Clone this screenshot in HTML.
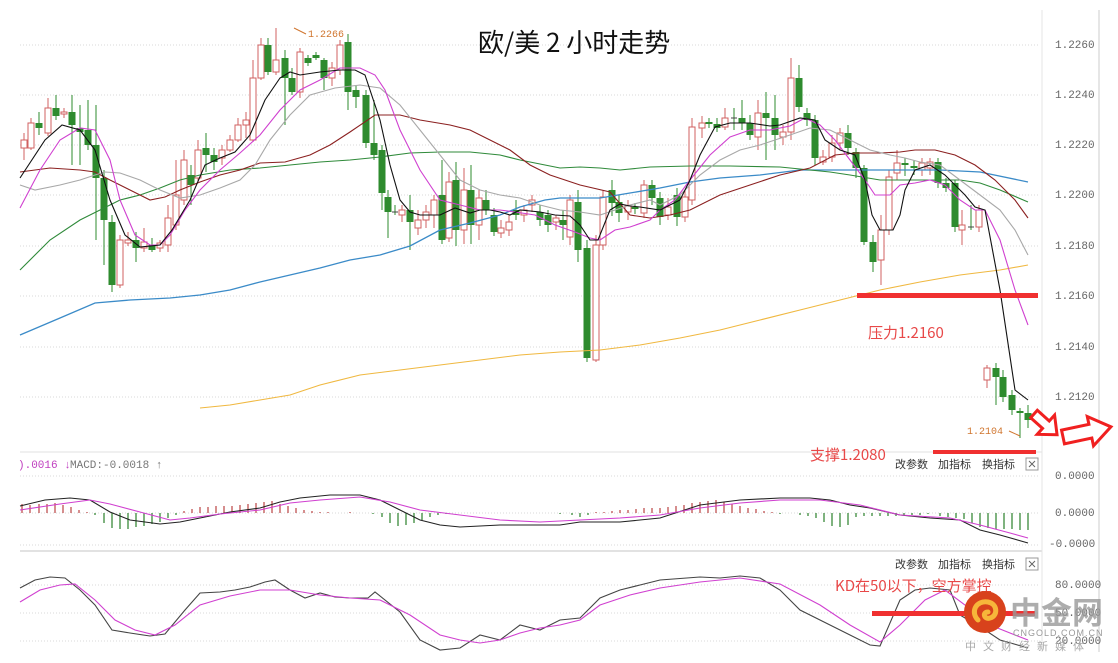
<!DOCTYPE html>
<html><head><meta charset="utf-8">
<style>
html,body{margin:0;padding:0;background:#fff;}
body{width:1118px;height:663px;overflow:hidden;position:relative;font-family:"Liberation Sans","Noto Sans CJK SC",sans-serif;}
svg{position:absolute;left:0;top:0;}
</style></head><body>
<svg id="s" width="1118" height="663" xmlns="http://www.w3.org/2000/svg" font-family="Liberation Sans, Noto Sans CJK SC, sans-serif">
<g stroke="#d8d8d8" stroke-dasharray="1,2" stroke-width="1">
<line x1="20" y1="45" x2="1040" y2="45"/><line x1="20" y1="95" x2="1040" y2="95"/>
<line x1="20" y1="145" x2="1040" y2="145"/><line x1="20" y1="195" x2="1040" y2="195"/>
<line x1="20" y1="246" x2="1040" y2="246"/><line x1="20" y1="296" x2="1040" y2="296"/>
<line x1="20" y1="347" x2="1040" y2="347"/><line x1="20" y1="397" x2="1040" y2="397"/>
<line x1="20" y1="476" x2="1040" y2="476"/><line x1="20" y1="513" x2="1040" y2="513"/>
<line x1="20" y1="545" x2="1040" y2="545"/>
<line x1="20" y1="585" x2="1040" y2="585"/><line x1="20" y1="613" x2="1040" y2="613"/><line x1="20" y1="641" x2="1040" y2="641"/>
</g>
<line x1="20" y1="452" x2="1042" y2="452" stroke="#e2e2e2"/>
<line x1="20" y1="551" x2="1042" y2="551" stroke="#e2e2e2" stroke-width="2"/>
<line x1="1042" y1="10" x2="1042" y2="652" stroke="#e4e4e4"/>
<line x1="1099" y1="10" x2="1099" y2="652" stroke="#e6e6e6" stroke-width="2"/>
<g font-family="Liberation Mono, monospace" font-size="11" fill="#666">
<text x="1055" y="48">1.2260</text><text x="1055" y="98">1.2240</text><text x="1055" y="148">1.2220</text>
<text x="1055" y="198">1.2200</text><text x="1055" y="249">1.2180</text><text x="1055" y="299">1.2160</text>
<text x="1055" y="350">1.2140</text><text x="1055" y="400">1.2120</text>
<text x="1055" y="479">0.0000</text><text x="1055" y="516">0.0000</text><text x="1049" y="547">-0.0000</text>
<text x="1055" y="588">80.0000</text><text x="1055" y="616">50.0000</text><text x="1055" y="644">20.0000</text>
</g>
<text x="478" y="52" font-size="26" fill="#111" font-family="Noto Sans CJK SC, sans-serif">欧/美 2 小时走势</text>
<g id="cd"></g>
<g fill="none" stroke-width="1.1" id="ma"></g>
<text x="308" y="37" font-size="10" fill="#d0752e" font-family="Liberation Mono, monospace">1.2266</text>
<path d="M294,28 L306,34" stroke="#d0752e" fill="none"/>
<text x="967" y="434" font-size="10" fill="#d0752e" font-family="Liberation Mono, monospace">1.2104</text>
<path d="M1009,431 L1020,436" stroke="#d0752e" fill="none"/>
<rect x="857" y="293" width="181" height="5" fill="#f03030"/>
<rect x="933" y="450" width="103" height="4" fill="#f03030"/>
<text x="868" y="338" font-size="15" fill="#e84848" font-family="Noto Sans CJK SC, sans-serif">压力1.2160</text>
<text x="810" y="460" font-size="15" fill="#e84848" font-family="Noto Sans CJK SC, sans-serif">支撑1.2080</text>
<path transform="translate(1034,414) rotate(42)" d="M0,-5 L16,-5 L16,-13 L31,0 L16,13 L16,5 L0,5 Z" fill="#fff" stroke="#f02020" stroke-width="3" stroke-linejoin="miter"/>
<path transform="translate(1063,437) rotate(-12)" d="M0,-7 L28,-7 L28,-15 L49,0 L28,15 L28,7 L0,7 Z" fill="#fff" stroke="#f02020" stroke-width="3" stroke-linejoin="miter"/>
<g font-size="11" fill="#333" font-family="Noto Sans CJK SC, sans-serif">
<text x="895" y="468">改参数</text><text x="938" y="468">加指标</text><text x="982" y="468">换指标</text>
<text x="895" y="568">改参数</text><text x="938" y="568">加指标</text><text x="982" y="568">换指标</text>
</g>
<rect x="1026" y="458" width="12" height="12" fill="#fff" stroke="#999"/><path d="M1029,461 l6,6 M1035,461 l-6,6" stroke="#666"/>
<rect x="1026" y="558" width="12" height="12" fill="#fff" stroke="#999"/><path d="M1029,561 l6,6 M1035,561 l-6,6" stroke="#666"/>
<text x="18" y="468" font-size="11" fill="#c040c0" font-family="Liberation Mono, monospace">).0016 ↓</text>
<text x="70" y="468" font-size="11" fill="#777" font-family="Liberation Mono, monospace">MACD:-0.0018 ↑</text>
<g id="hist"></g>
<g fill="none" stroke-width="1.2" id="ind"></g>
<rect x="872" y="611" width="163" height="5" fill="#f03030"/>
<text x="835" y="591" font-size="15" fill="#e84848" font-family="Noto Sans CJK SC, sans-serif">KD在50以下，空方掌控</text>
<circle cx="985" cy="612" r="21" fill="#d8421c"/>
<path d="M978,620 C970,612 976,600 988,602 C998,604 998,616 990,618 C984,620 982,612 988,612" fill="none" stroke="#f7b63a" stroke-width="5" stroke-linecap="round"/>
<text x="1010" y="624" font-size="31" font-weight="bold" fill="#999" fill-opacity="0.8" font-family="Noto Sans CJK SC, sans-serif">中金网</text>
<text x="1013" y="636" font-size="9" fill="#999" letter-spacing="1">CNGOLD.COM.CN</text>
<text x="965" y="650" font-size="11" fill="#aaa" letter-spacing="7" font-family="Noto Sans CJK SC, sans-serif">中文财经新媒体</text>
</svg>
<script>
var NS="http://www.w3.org/2000/svg";
function el(p,t,a){var e=document.createElementNS(NS,t);for(var k in a)e.setAttribute(k,a[k]);p.appendChild(e);return e;}
var cd=document.getElementById('cd');
var C=[[24,148,140,133,160],[31,148,123,118,150],[39,123,128,112,135],[48,133,108,98,136],[56,108,116,95,120],[64,114,112,108,118],[72,112,125,95,165],[80,128,132,105,165],[88,130,145,100,150],[96,145,178,105,240],[104,178,220,170,265],[112,222,285,215,292],[120,285,240,235,288],[128,243,240,232,246],[136,240,248,232,262],[144,248,242,228,252],[152,245,250,238,252],[160,248,243,240,252],[168,245,218,205,252],[176,225,195,160,230],[184,200,160,150,205],[191,175,185,165,205],[198,178,150,140,182],[206,148,155,133,172],[214,155,162,148,170],[222,158,150,145,165],[230,150,140,135,152],[238,140,125,118,142],[246,125,120,112,138],[253,140,78,60,142],[261,78,45,38,80],[268,45,72,38,75],[276,72,60,28,75],[285,58,78,50,125],[292,78,92,68,95],[300,92,52,48,98],[308,58,63,55,66],[316,55,58,52,60],[324,60,78,58,90],[332,78,68,62,86],[340,70,45,40,75],[348,42,92,34,110],[356,90,97,85,108],[366,95,143,90,148],[374,143,155,100,160],[382,150,193,145,210],[388,197,212,190,238],[395,212,212,205,215],[402,215,210,205,222],[410,210,222,195,250],[418,228,220,210,235],[426,220,212,205,228],[434,215,200,195,228],[442,195,240,160,244],[449,238,182,172,242],[456,180,230,162,246],[464,230,190,168,244],[471,190,225,165,244],[479,225,198,190,240],[486,200,210,190,215],[494,215,232,208,236],[501,233,228,220,238],[509,230,222,215,236],[516,210,215,200,220],[524,215,210,205,222],[532,205,200,195,212],[540,212,220,205,226],[548,215,225,210,232],[556,222,218,215,230],[563,220,225,210,240],[570,237,200,195,245],[578,202,250,190,262],[587,248,358,240,362],[596,360,245,235,362],[603,245,197,190,250],[612,190,203,180,216],[619,202,213,195,222],[628,212,206,200,220],[635,207,209,203,214],[644,213,185,180,218],[652,185,198,180,205],[660,198,217,192,225],[668,215,207,198,220],[677,195,217,188,226],[685,217,197,190,222],[692,200,127,118,205],[702,128,123,116,138],[709,122,124,118,128],[717,124,128,118,132],[725,127,118,108,130],[734,118,118,108,130],[742,118,123,100,130],[750,123,135,115,140],[758,137,113,100,150],[766,113,118,92,160],[775,118,135,95,150],[783,137,132,125,145],[791,132,78,58,140],[799,78,107,65,112],[807,113,120,108,126],[815,120,158,115,165],[823,162,157,150,165],[832,157,143,135,162],[840,143,133,128,150],[848,133,148,125,155],[856,152,168,148,178],[864,168,242,165,245],[873,242,262,235,272],[881,260,230,215,285],[889,230,177,170,235],[897,173,163,150,180],[905,163,165,158,176],[914,166,168,160,175],[922,170,163,158,176],[930,168,162,158,175],[938,162,183,158,188],[946,183,188,178,192],[955,183,227,180,232],[962,230,225,210,245],[971,227,227,205,230],[979,227,210,205,232],[987,380,368,365,388],[996,368,377,363,405],[1003,377,397,370,402],[1012,395,410,390,415],[1020,411,413,408,438],[1028,413,420,405,428]];
C.forEach(function(c){var up=c[2]<c[1];var col=up?"#d06060":"#2e8b2e";var t=Math.min(c[1],c[2]),b=Math.max(c[1],c[2]);
el(cd,'line',{x1:c[0],x2:c[0],y1:c[3],y2:c[4],stroke:col,'stroke-width':1});
if(b-t<1.5){el(cd,'line',{x1:c[0]-3,x2:c[0]+3,y1:t,y2:t,stroke:up?col:"#444"});}
else if(up)el(cd,'rect',{x:c[0]-3,y:t,width:6,height:b-t,fill:"#fff",stroke:col});
else el(cd,'rect',{x:c[0]-3.5,y:t,width:7,height:b-t,fill:col});});
function pl(g,pts,col,w){el(document.getElementById(g),'polyline',{points:pts,stroke:col,'stroke-width':w||1.1,fill:'none'});}
pl('ma',"200,408 230,405 260,400 290,395 320,385 360,375 400,370 440,365 480,360 520,355 560,352 600,350 640,345 680,338 720,330 760,320 800,310 840,300 880,290 920,282 960,275 1000,270 1028,265","#f0b840");
pl('ma',"20,335 60,318 95,303 130,300 170,298 200,295 230,290 260,282 290,275 320,268 350,260 380,255 410,246 440,230 470,223 500,215 520,207 545,200 560,198 600,198 630,193 660,188 690,182 720,178 760,175 800,170 860,170 900,170 940,170 980,172 1028,182","#3b8bc8",1.3);
pl('ma',"20,270 50,240 80,220 100,210 120,200 140,195 160,188 180,180 200,175 230,170 260,168 290,165 320,162 350,160 380,157 410,153 440,152 470,152 500,155 520,160 545,165 560,168 580,167 600,168 620,170 650,167 690,166 730,166 780,167 830,172 850,175 880,180 910,180 940,180 960,180 980,183 1000,190 1028,202","#2f8a3a");
pl('ma',"20,172 50,168 80,170 95,172 110,180 130,190 150,200 165,197 180,190 200,182 220,175 240,170 260,163 285,162 310,155 330,145 350,132 375,115 400,115 420,120 450,125 470,130 490,140 510,150 530,165 550,175 580,185 610,192 630,215 650,218 670,215 690,210 720,195 750,185 780,175 810,168 835,155 855,153 880,153 900,152 915,150 935,150 955,155 975,165 995,180 1015,200 1028,218","#8b2020");
pl('ma',"20,185 35,190 60,185 80,180 95,175 105,172 120,173 140,180 160,190 180,198 200,195 220,188 240,180 255,165 270,140 290,115 310,95 335,88 360,85 380,88 400,105 420,130 440,155 460,180 480,190 500,195 520,198 540,205 560,210 580,212 600,215 630,205 650,200 660,205 680,195 700,175 720,160 740,150 760,145 790,135 810,128 830,130 850,140 870,150 890,155 905,158 920,162 940,165 960,180 980,195 1000,210 1015,230 1028,255","#a8a8a8");
pl('ma',"20,208 40,170 60,140 80,128 95,130 110,160 120,200 135,235 150,245 160,245 170,235 185,210 200,190 220,170 240,153 260,135 280,110 300,90 320,80 340,68 360,68 375,75 385,90 400,130 420,170 440,200 460,205 480,210 500,210 515,212 535,215 555,225 575,232 590,238 600,240 615,230 630,227 650,220 660,210 675,200 690,180 710,155 730,137 750,130 770,130 790,126 805,118 820,125 835,140 850,160 865,180 875,195 890,195 900,185 915,183 930,180 945,185 960,200 975,210 985,210 1000,240 1015,290 1028,325","#d040d0");
pl('ma',"20,178 45,140 62,125 80,130 95,150 110,200 125,235 140,247 160,245 172,230 190,200 205,165 220,158 235,152 250,135 265,100 280,78 290,72 300,75 320,72 340,70 355,70 365,75 380,120 390,165 400,200 410,212 420,215 440,215 455,208 470,213 480,210 490,210 500,212 510,215 520,210 540,212 555,215 570,216 580,225 590,240 598,240 610,210 620,204 630,206 640,207 660,210 680,200 690,180 700,155 715,127 730,123 750,123 770,126 780,125 800,118 815,120 825,140 840,150 855,155 865,180 872,215 880,230 893,230 900,215 905,190 915,170 930,165 945,175 955,185 965,195 975,207 985,210 1000,290 1015,390 1028,400","#111");
var h=document.getElementById('hist');
var H=[[22,-9],[30,-8],[39,-9],[47,-9],[55,-10],[63,-8],[71,-6],[79,-3],[87,-1],[95,2],[104,10],[112,15],[120,16],[128,16],[136,14],[144,13],[152,11],[160,9],[168,5],[176,2],[184,-2],[192,-4],[200,-6],[208,-6],[216,-7],[224,-7],[232,-7],[240,-8],[248,-9],[256,-10],[264,-11],[272,-12],[280,-9],[288,-7],[296,-5],[304,-3],[312,-2],[320,-1],[328,-1],[336,0],[350,-1],[373,1],[382,4],[390,10],[398,13],[406,12],[414,10],[422,7],[430,4],[438,2],[446,1],[470,0],[500,0],[560,1],[572,2],[580,4],[588,2],[596,-1],[604,-1],[612,-2],[620,-3],[628,-3],[636,-4],[644,-5],[652,-5],[660,-5],[668,-6],[676,-7],[684,-8],[692,-10],[700,-11],[708,-12],[716,-13],[724,-11],[732,-9],[740,-7],[748,-5],[756,-4],[764,-2],[772,-1],[780,1],[800,2],[808,3],[816,5],[824,9],[832,13],[840,14],[848,12],[856,4],[864,3],[872,3],[880,3],[888,3],[896,3],[904,2],[912,2],[920,2],[928,1],[940,3],[948,4],[956,5],[964,6],[972,10],[980,14],[988,15],[996,16],[1004,16],[1012,16],[1020,17],[1028,17]];
H.forEach(function(b){el(h,'line',{x1:b[0],x2:b[0],y1:513,y2:513+b[1],stroke:b[1]<0?"#c05050":"#3a8a3a",'stroke-width':1.3});});
pl('ind',"20,506 45,500 70,498 90,500 110,512 130,520 160,524 180,522 200,518 230,512 260,508 280,502 300,498 330,495 360,495 380,500 400,510 420,520 440,525 460,527 500,525 540,525 560,525 580,522 620,522 660,518 700,505 740,500 780,498 810,498 830,500 850,505 870,508 900,515 930,518 960,520 980,530 1000,535 1028,543","#222");
pl('ind',"20,510 60,504 90,500 110,504 140,512 170,520 190,518 220,514 260,510 290,503 320,500 360,497 390,502 420,510 460,515 500,520 540,522 580,520 620,518 660,515 700,508 740,503 780,500 820,500 860,505 900,515 950,518 980,525 1010,533 1028,538","#d040d0");
pl('ind',"20,588 35,580 50,577 65,578 80,590 95,605 112,630 130,633 150,636 165,634 185,610 200,593 220,592 235,590 250,587 265,582 275,580 290,590 305,598 320,593 335,597 350,598 368,598 375,592 400,612 420,640 440,650 460,648 480,635 500,640 520,625 540,630 560,620 580,618 600,598 620,590 640,585 660,580 700,577 720,578 740,576 760,578 780,590 800,610 830,625 850,635 870,645 880,646 900,600 915,590 930,588 950,590 960,615 985,630 1000,640 1028,648","#444");
pl('ind',"20,602 40,590 60,585 75,584 95,600 115,620 135,630 155,635 175,625 200,605 230,596 260,590 290,590 320,595 350,598 380,600 410,615 440,635 460,640 480,643 500,640 520,633 540,628 560,625 580,620 600,605 630,595 660,588 700,582 740,578 780,584 820,605 850,625 880,642 900,625 925,600 945,590 965,605 990,625 1015,635 1028,640","#d040d0");
</script>
</body></html>
